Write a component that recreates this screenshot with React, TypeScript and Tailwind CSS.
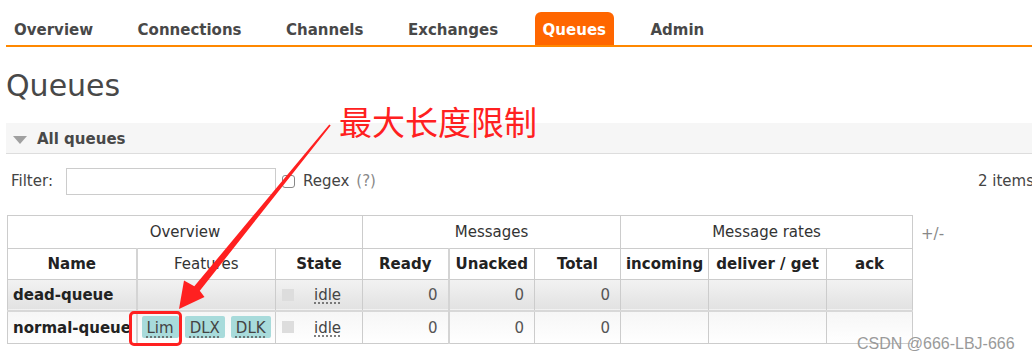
import React from 'react';

const navItems = ['Overview', 'Connections', 'Channels', 'Exchanges', 'Queues', 'Admin'];

type Queue = {
    name: string;
    features: string[];
    state: string;
    ready: number;
    unacked: number;
    total: number;
};

const queues: Queue[] = [
    { name: 'dead-queue', features: [], state: 'idle', ready: 0, unacked: 0, total: 0 },
    { name: 'normal-queue', features: ['Lim', 'DLX', 'DLK'], state: 'idle', ready: 0, unacked: 0, total: 0 },
];

export default function App() {
    return (
        <div className="relative w-full h-[359px] overflow-hidden bg-white text-[15px] text-[#444] font-['DejaVu_Sans',sans-serif]">
            {/* top menu */}
            <nav className="ml-[6px] pt-[12px] flex gap-[28.5px] border-b-2 border-[#ff8800]">
                {navItems.map((item) => (
                    <span
                        key={item}
                        className={
                            item === 'Queues'
                                ? 'h-[33px] leading-[36px] px-2 font-bold rounded-t-[6px] bg-[#ff6600] text-white'
                                : 'h-[33px] leading-[36px] px-2 font-bold text-[#484848]'
                        }
                    >
                        {item}
                    </span>
                ))}
            </nav>

            <h1 className="mt-[21px] ml-[6px] text-[30px] leading-[36px] text-[#484848]">Queues</h1>

            <div className="mt-[19px] ml-[6px] h-[31px] pt-[2px] flex items-center bg-[#f6f6f6] border-b border-[#dddddd]">
                <svg width="14" height="9" viewBox="0 0 14 9" className="ml-[7px] mt-[2px]">
                    <polygon points="0,0 14,0 7,8" fill="#a0a0a0" />
                </svg>
                <span className="ml-[10px] font-bold text-[#484848]">All queues</span>
            </div>

            <div className="mt-[14px] pl-[11px] w-[1087px] flex items-center">
                <span>Filter:</span>
                <input className="ml-[13px] w-[210px] h-[27px] border border-[#cccccc] bg-white" />
                <span className="ml-[6px] w-[13px] h-[13px] rounded-[3px] border border-[#888888] bg-white" />
                <span className="ml-[8px]">Regex</span>
                <span className="ml-[7px] text-[#888888]">(?)</span>
                <span className="ml-auto">2 items shown</span>
            </div>

            <div className="mt-[20px] ml-[7px] flex items-start">
                <table className="border-collapse table-fixed w-[905px] text-[#222]">
                    <colgroup>
                        <col className="w-[129px]" />
                        <col className="w-[139px]" />
                        <col className="w-[87px]" />
                        <col className="w-[86px]" />
                        <col className="w-[86px]" />
                        <col className="w-[86px]" />
                        <col className="w-[88px]" />
                        <col className="w-[118px]" />
                        <col className="w-[86px]" />
                    </colgroup>
                    <thead>
                        <tr className="h-[33px]">
                            <th colSpan={3} className="border border-[#cccccc] pt-[1px] font-normal text-[#333]">Overview</th>
                            <th colSpan={3} className="border border-[#cccccc] pt-[1px] font-normal text-[#333]">Messages</th>
                            <th colSpan={3} className="border border-[#cccccc] pt-[1px] font-normal text-[#333]">Message rates</th>
                        </tr>
                        <tr className="h-[31px]">
                            <th className="border border-[#cccccc] border-r-2 border-r-[#d4d4d4]">Name</th>
                            <th className="border border-[#cccccc] font-normal text-[#333]">Features</th>
                            <th className="border border-[#cccccc]">State</th>
                            <th className="border border-[#cccccc] border-r-2 border-r-[#d4d4d4]">Ready</th>
                            <th className="border border-[#cccccc]">Unacked</th>
                            <th className="border border-[#cccccc]">Total</th>
                            <th className="border border-[#cccccc]">incoming</th>
                            <th className="border border-[#cccccc]">deliver / get</th>
                            <th className="border border-[#cccccc]">ack</th>
                        </tr>
                    </thead>
                    <tbody>
                        {queues.map((q, i) => (
                            <tr
                                key={q.name}
                                className={
                                    i === 0
                                        ? 'h-[31px] bg-gradient-to-b from-[#f2f2f2] to-[#e2e2e2] border-b-2 border-b-[#d8d8d8]'
                                        : 'h-[33px] bg-gradient-to-b from-[#f6f6f6] to-[#ffffff]'
                                }
                            >
                                <td className="border border-[#cccccc] border-r-2 border-r-[#d4d4d4] pl-[5px] pt-[1px] font-bold whitespace-nowrap overflow-hidden">
                                    {q.name}
                                </td>
                                <td className="border border-[#cccccc] pl-[4px]">
                                    <div className="flex gap-[6px]">
                                        {q.features.map((f) => (
                                            <span
                                                key={f}
                                                className="h-[22px] leading-[24px] px-[5px] rounded-[2px] bg-[#a8dbdb] text-[#444] underline decoration-dotted decoration-[#555] underline-offset-[3px]"
                                            >
                                                {f}
                                            </span>
                                        ))}
                                    </div>
                                </td>
                                <td className="border border-[#cccccc] pl-[6px]">
                                    <div className="flex items-center">
                                        <span className="w-[12px] h-[12px] bg-[#dddddd]" />
                                        <span className="ml-[20px] pt-[1px] text-[#444] underline decoration-dotted decoration-[#555] underline-offset-[3px]">
                                            {q.state}
                                        </span>
                                    </div>
                                </td>
                                <td className="border border-[#cccccc] border-r-2 border-r-[#d4d4d4] text-right pr-[10px] pt-[1px] text-[#555]">{q.ready}</td>
                                <td className="border border-[#cccccc] text-right pr-[10px] pt-[1px] text-[#555]">{q.unacked}</td>
                                <td className="border border-[#cccccc] text-right pr-[10px] pt-[1px] text-[#555]">{q.total}</td>
                                <td className="border border-[#cccccc]" />
                                <td className="border border-[#cccccc]" />
                                <td className="border border-[#cccccc]" />
                            </tr>
                        ))}
                    </tbody>
                </table>
                <span className="ml-[8px] mt-[8px] text-[#888888]">+/-</span>
            </div>

            {/* annotation overlay */}
            <span className="absolute left-[339px] top-[101px] text-[33px] leading-[40px] text-[#ff2020] font-['Noto_Sans_CJK_SC',sans-serif]">
                最大长度限制
            </span>
            <svg className="absolute left-0 top-0" width="1032" height="359" viewBox="0 0 1032 359">
                <polygon
                    points="329.3,124.5 330.7,125.5 199.8,290.8 204.5,297 179,309 184,280.5 194.3,286.3"
                    fill="#ff2020"
                />
            </svg>
            <div className="absolute left-[129px] top-[311px] w-[53px] h-[35px] rounded-[5px] border-[3px] border-[#ff2020]" />

            <span className="absolute left-[857px] top-[334px] text-[16px] leading-[20px] text-[#9a9a9a] font-['Liberation_Sans',sans-serif]">
                CSDN @666-LBJ-666
            </span>
        </div>
    );
}
